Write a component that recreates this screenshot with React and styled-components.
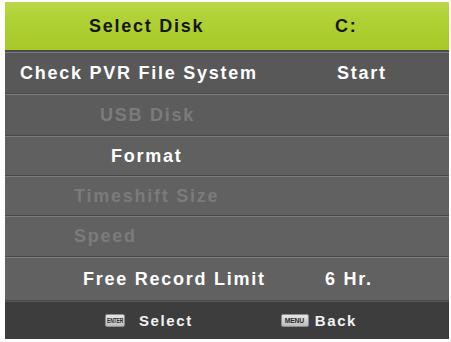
import React from "react";
import styled, { createGlobalStyle } from "styled-components";

const Global = createGlobalStyle`
  html, body { margin: 0; padding: 0; background: #ffffff; }
  body { font-family: "Liberation Sans", Arial, sans-serif; }
`;

const Panel = styled.div`
  margin: 2px 2px 3px 5px;
  width: 444px;
  display: flex;
  flex-direction: column;
  background: #5f5f5f;
`;

const Row = styled.div`
  display: flex;
  align-items: center;
  height: ${(p) => p.$h}px;
  box-sizing: border-box;
  background: ${(p) =>
    p.$active
      ? "linear-gradient(to bottom, #bad84a 0%, #b0d236 30%, #a6c927 100%)"
      : p.$bg || "#606060"};
  border-top: ${(p) => (p.$active ? "none" : "1px solid #7c7c7c")};
  border-bottom: ${(p) => (p.$active ? "2px solid #4a4a4a" : "1px solid #484848")};
`;

const Label = styled.div`
  flex: 0 0 315px;
  box-sizing: border-box;
  padding-left: ${(p) => p.$x}px;
  font-size: 18px;
  font-weight: 700;
  letter-spacing: 1.75px;
  white-space: nowrap;
  color: ${(p) => (p.$active ? "#15150a" : p.$disabled ? "#7b7b7b" : "#ffffff")};
`;

const Value = styled(Label)`
  flex: 1 1 auto;
`;

const Footer = styled.div`
  height: 38px;
  display: flex;
  align-items: center;
  padding-left: 100px;
  background: #3d3d3d;
  border-top: 1px solid #575757;
  box-sizing: border-box;
`;

const Hint = styled.div`
  display: flex;
  align-items: center;
  gap: ${(p) => p.$gap}px;
  margin-right: ${(p) => p.$mr || 0}px;
`;

const Key = styled.span`
  display: inline-flex;
  align-items: center;
  justify-content: center;
  width: ${(p) => p.$w}px;
  height: 13px;
  border-radius: 2px;
  background: linear-gradient(to bottom, #e6e6e6, #bcbcbc);
  border: 1px solid #8e8e8e;
  box-sizing: border-box;
`;

const KeyLabel = styled.span`
  display: inline-block;
  color: #2a2a2a;
  font-family: "Liberation Sans", Arial, sans-serif;
  font-size: 8px;
  font-weight: 700;
  line-height: 1;
  letter-spacing: -0.2px;
  white-space: nowrap;
  transform: scaleX(${(p) => p.$sx});
`;

const HintText = styled.span`
  color: #f2f2f2;
  font-size: 15px;
  font-weight: 700;
  letter-spacing: 1.6px;
`;

const rows = [
  { label: "Select Disk", x: 84, value: "C:", vx: 15, active: true, h: 50 },
  { label: "Check PVR File System", x: 15, value: "Start", vx: 17, h: 42, bg: "#585858" },
  { label: "USB Disk", x: 95, disabled: true, h: 42, bg: "#5c5c5c" },
  { label: "Format", x: 106, h: 40, bg: "#606060" },
  { label: "Timeshift Size", x: 69, disabled: true, h: 40, bg: "#616161" },
  { label: "Speed", x: 69, disabled: true, h: 41, bg: "#616161" },
  { label: "Free Record Limit", x: 78, value: "6 Hr.", vx: 5, h: 44, bg: "#616161" },
];

export default function App() {
  return (
    <>
      <Global />
      <Panel>
        {rows.map((r) => (
          <Row key={r.label} $active={r.active} $h={r.h} $bg={r.bg}>
            <Label $x={r.x} $active={r.active} $disabled={r.disabled}>
              {r.label}
            </Label>
            {r.value && (
              <Value $x={r.vx} $active={r.active}>
                {r.value}
              </Value>
            )}
          </Row>
        ))}
        <Footer>
          <Hint $gap={14} $mr={88}>
            <Key $w={20}>
              <KeyLabel $sx={0.62}>ENTER</KeyLabel>
            </Key>
            <HintText>Select</HintText>
          </Hint>
          <Hint $gap={6}>
            <Key $w={28}>
              <KeyLabel $sx={0.85}>MENU</KeyLabel>
            </Key>
            <HintText>Back</HintText>
          </Hint>
        </Footer>
      </Panel>
    </>
  );
}
